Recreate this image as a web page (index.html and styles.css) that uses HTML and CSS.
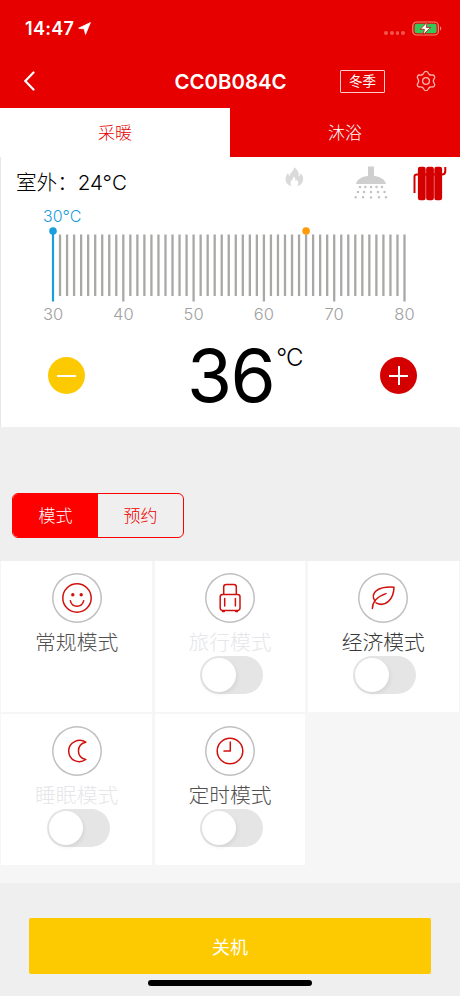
FILE: index.html
```html
<!DOCTYPE html>
<html lang="zh-CN">
<head>
    <meta charset="UTF-8">
    <meta name="viewport" content="width=device-width, initial-scale=1">
    <title>CC0B084C</title>
    <link rel="stylesheet" href="styles.css">
</head>
<body>
    <header>
        <div class="status-bar">
            <span class="time">14:47</span>
            <svg class="location" width="13" height="13" viewBox="0 0 13 13"><path d="M12.4 0.6 L7.5 12.4 L6.2 6.9 L0.6 6.2 Z" fill="#fff" stroke="#fff" stroke-width="0.8" stroke-linejoin="round"/></svg>
            <span class="signal"><i></i><i></i><i></i><i></i></span>
            <svg class="battery" width="30" height="15" viewBox="0 0 30 15">
                <rect x="0.8" y="1" width="25.6" height="13" rx="3.8" fill="none" stroke="#f08a78" stroke-width="1.2"/>
                <rect x="2.6" y="2.8" width="22" height="9.4" rx="2" fill="#35c759"/>
                <path d="M28 5.3 v4.4 c1.8 -0.8 1.8 -3.6 0 -4.4z" fill="#f08a78"/>
                <path d="M15.2 1.2 L8.2 8.3 h4.2 L11.1 13.8 L18.8 6.4 h-4.5 Z" fill="#fff" stroke="#b8201a" stroke-width="0.9"/>
            </svg>
        </div>
        <nav class="nav-bar">
            <svg class="back" width="12" height="20" viewBox="0 0 12 20"><path d="M10.5 1.5 L2.3 10 L10.5 18.5" fill="none" stroke="#fff" stroke-width="2.2" stroke-linecap="round"/></svg>
            <h1>CC0B084C</h1>
            <span class="season">冬季</span>
            <svg class="gear" width="22" height="22" viewBox="-11 -11 22 22">
                <defs><path id="tooth" d="M-3.7 -6.4 Q-2.5 -7 -2 -8.4 Q-1.6 -9.7 0 -9.7 Q1.6 -9.7 2 -8.4 Q2.5 -7 3.7 -6.4"/></defs>
                <g fill="none" stroke="#fbb4aa" stroke-width="1.3" stroke-linecap="round">
                    <use href="#tooth"/>
                    <use href="#tooth" transform="rotate(60)"/>
                    <use href="#tooth" transform="rotate(120)"/>
                    <use href="#tooth" transform="rotate(180)"/>
                    <use href="#tooth" transform="rotate(240)"/>
                    <use href="#tooth" transform="rotate(300)"/>
                    <circle r="3.4"/>
                </g>
            </svg>
        </nav>
    </header>

    <div class="tabs">
        <div class="tab active">采暖</div>
        <div class="tab">沐浴</div>
    </div>

    <section class="panel">
        <div class="info">
            <span class="outdoor">室外：24°C</span>
            <svg class="flame" width="19" height="20" viewBox="0 0 19 20"><path d="M9 0.3 C13 3 14.4 6 13.6 9.2 C15 8.8 15.5 7.6 15.5 6 C18 8.5 18.6 11 18 13.6 C17.3 16.7 15 18.5 12.3 19.3 C14 16.5 13.5 14.5 11.8 12.7 L10.4 14.2 C10.7 12 9.9 10.7 8.6 9.6 C8.4 12.4 5.2 13.9 5.6 17 C5.7 18 6 18.7 6.6 19.3 C2.8 18.3 0.4 15.4 0.6 11.8 C0.7 9.2 2 7.3 3.2 5.8 C3.3 7.4 3.7 8.5 4.9 9 C4.5 5.6 9 4.6 9 0.3z" fill="#dadada"/></svg>
            <svg class="shower" width="34" height="34" viewBox="0 0 34 34">
                <path d="M14 0.5 h6 v9.5 c6 0.7 11 3.2 12 8 H2 c1 -4.8 6 -7.3 12 -8z" fill="#cfcfcf"/>
                <g fill="none" stroke="#c2c2c2" stroke-width="2.5" stroke-linecap="round">
                    <path d="M6 20.9 h.01 M11.3 20.9 h.01 M17 20.9 h.01 M22.5 20.9 h.01 M28 20.9 h.01"/>
                    <path d="M4 26 h.01 M10 26 h.01 M17 26 h.01 M24 26 h.01 M30.5 26 h.01"/>
                    <path d="M1.7 31.2 h.01 M9 31.2 h.01 M17 31.5 h.01 M25 31.2 h.01 M32 31.2 h.01"/>
                </g>
            </svg>
            <svg class="radiator" width="34" height="35" viewBox="0 0 34 35">
                <g fill="#d40000">
                    <rect x="4.9" y="0.7" width="7.8" height="33.5" rx="2.2"/>
                    <rect x="13.1" y="0.7" width="7.8" height="33.5" rx="2.2"/>
                    <rect x="21.3" y="0.7" width="7.8" height="33.5" rx="2.2"/>
                </g>
                <path d="M1.5 27 V10.5 Q1.5 8.5 4 8.5 H29 Q32.3 8.5 32.3 5 V1" fill="none" stroke="#d40000" stroke-width="2"/>
            </svg>
        </div>
        <div class="scale-value">30°C</div>
        <svg class="ruler" id="ruler" width="460" height="100" viewBox="0 0 460 100"></svg>
        <div class="setting">
            <button class="round minus"></button>
            <div class="temp">36<sup>°C</sup></div>
            <button class="round plus"></button>
        </div>
    </section>

    <div class="segment">
        <span class="active">模式</span>
        <span>预约</span>
    </div>

    <section class="modes">
        <div class="mode">
            <svg class="icon" viewBox="0 0 50 50">
                <circle cx="25" cy="25" r="14.2"/>
                <path d="M18.3 27.7 C20 35.2 30 35.2 31.7 27.7"/>
                <circle class="dot" cx="20.8" cy="21.8" r="1.7"/><circle class="dot" cx="29.2" cy="21.8" r="1.7"/>
            </svg>
            <p>常规模式</p>
        </div>
        <div class="mode disabled">
            <svg class="icon" viewBox="0 0 50 50">
                <path d="M18.7 21.3 V14 Q18.7 11.5 21.2 11.5 H28.8 Q31.3 11.5 31.3 14 V21.3"/>
                <rect x="15.2" y="21.4" width="19.8" height="16" rx="2.3"/>
                <path d="M19.7 25.5 v7.5 M30.4 25.5 v7.5 M17.5 38.5 h1.8 M30.7 38.5 h1.8"/>
            </svg>
            <p>旅行模式</p>
            <span class="switch"></span>
        </div>
        <div class="mode eco">
            <svg class="icon" viewBox="0 0 50 50">
                <path d="M14.4 35.5 C14.5 28.5 20 23.3 28 20.6 M17 28.4 C11.5 19.5 20 13.3 36 14.2 C35.7 26 27.5 35 18 29.8"/>
            </svg>
            <p>经济模式</p>
            <span class="switch"></span>
        </div>
        <div class="mode disabled">
            <svg class="icon" viewBox="0 0 50 50">
                <path d="M33.8 16.2 C27 11.8 16.7 16 16.7 25 C16.7 34.5 27 38.3 33.8 33.5 C24 32.5 24 17.5 33.8 16.2z"/>
            </svg>
            <p>睡眠模式</p>
            <span class="switch"></span>
        </div>
        <div class="mode">
            <svg class="icon" viewBox="0 0 50 50">
                <circle cx="25" cy="25" r="12.8"/>
                <path d="M25.3 16 V25 H19"/>
            </svg>
            <p>定时模式</p>
            <span class="switch"></span>
        </div>
    </section>

    <footer>
        <button class="power">关机</button>
        <div class="home-indicator"></div>
    </footer>

    <script>
        // Temperature ruler, 30 to 80 degrees
        const left = 53, step = 7.03;
        const current = 30, marker = 66;
        let out = '';
        for (let t = 30; t <= 80; t++) {
            const x = (left + (t - 30) * step).toFixed(2);
            const major = t % 10 === 0;
            if (t !== current) {
                out += `<line class="tick" x1="${x}" x2="${x}" y1="8.5" y2="${major ? 75.5 : 70}"/>`;
            }
            if (major) {
                out += `<text x="${x}" y="94">${t}</text>`;
            }
            if (t === marker) {
                out += `<circle class="marker" cx="${x}" cy="5" r="3.8"/>`;
            }
            if (t === current) {
                out += `<line class="current" x1="${x}" x2="${x}" y1="5" y2="75.5"/><circle class="knob" cx="${x}" cy="5" r="3.8"/>`;
            }
        }
        document.getElementById('ruler').innerHTML = out;
    </script>
</body>
</html>
```
FILE: styles.css
```css
* {
    box-sizing: border-box;
    margin: 0;
    padding: 0;
}

body {
    width: 460px;
    height: 996px;
    overflow: hidden;
    background: #efefef;
    font-family: Inter, "Noto Sans CJK SC", sans-serif;
    color: #000;
}

svg {
    display: block;
    flex: none;
}

button {
    border: none;
    font-family: inherit;
}

header {
    height: 108px;
    background: #e60000;
    color: #fff;
}

.status-bar {
    display: flex;
    align-items: center;
    height: 57px;
    padding: 0 18px 0 25px;
}

.time {
    font-size: 18px;
    font-weight: 600;
    letter-spacing: 0.3px;
    width: 53px;
}

.signal {
    display: flex;
    gap: 1.8px;
    margin: 9px 7px 0 auto;
}

.signal i {
    width: 3.8px;
    height: 3.8px;
    border-radius: 50%;
    background: #f0574c;
}

.nav-bar {
    display: grid;
    grid-template-columns: 60px 1fr 45px 75px;
    align-items: center;
    height: 48px;
    padding-left: 23px;
}

h1 {
    font-size: 20.4px;
    font-weight: 600;
    padding-left: 91.5px;
}

.season {
    height: 23px;
    border: 1px solid #fcc;
    border-radius: 1px;
    font-size: 13.5px;
    line-height: 20px;
    text-align: center;
}

.gear {
    margin-left: 30px;
}

.tabs {
    display: flex;
    height: 49px;
    background: #e60000;
}

.tab {
    flex: 1;
    color: #fff;
    font-size: 17px;
    font-weight: 300;
    line-height: 50px;
    text-align: center;
}

.tab.active {
    background: #fff;
    color: #e60000;
}

.panel {
    height: 270px;
    background: #fff;
    border-left: 1px solid #e8e8e8;
}

.info {
    display: flex;
    align-items: flex-start;
    height: 50px;
    padding: 9px 13px 0 15px;
}

.outdoor {
    width: 269px;
    font-size: 20.6px;
    font-weight: 300;
    line-height: 33px;
}

.flame {
    margin: 1px 50px 0 0;
}

.shower {
    margin-right: 25px;
}

.scale-value {
    padding-left: 42px;
    color: #1a9bdc;
    font-size: 16px;
    font-weight: 300;
    line-height: 19px;
}

.ruler {
    margin-left: -1px;
}

.ruler text {
    fill: #a0a0a0;
    font-size: 16.5px;
    font-weight: 300;
    text-anchor: middle;
}

.tick {
    stroke: #a8a8a6;
    stroke-width: 2.3;
}

.current {
    stroke: #1a9fdc;
    stroke-width: 2.2;
}

.knob {
    fill: #1a9fdc;
}

.marker {
    fill: #ff9a0a;
}

.setting {
    display: flex;
    align-items: center;
    justify-content: space-between;
    height: 99px;
    padding: 0 42.5px 0 47px;
}

.round {
    width: 37px;
    height: 37px;
    border-radius: 50%;
    background: linear-gradient(#fff, #fff) center / 19px 2px no-repeat #fdca02;
}

.plus {
    background: linear-gradient(#fff, #fff) center / 19px 2px no-repeat, linear-gradient(#fff, #fff) center / 2px 19px no-repeat #d40000;
}

.temp {
    display: flex;
    font-size: 73px;
    letter-spacing: -1.5px;
    line-height: 99px;
    padding-left: 24px;
}

.temp sup {
    margin-left: 2px;
    font-size: 24px;
    font-weight: 300;
    letter-spacing: -1px;
    line-height: 63px;
}

.segment {
    display: flex;
    width: 172px;
    height: 45px;
    margin: 66px 0 23px 12px;
    border: 1px solid #f00;
    border-radius: 6px;
    overflow: hidden;
}

.segment span {
    flex: 1;
    color: #f00000;
    font-size: 17px;
    font-weight: 300;
    line-height: 45px;
    text-align: center;
}

.segment .active {
    background: #f00;
    color: #fff;
}

.modes {
    display: grid;
    grid-template-columns: repeat(3, 1fr);
    grid-auto-rows: 151px;
    gap: 2.4px;
    height: 322px;
    padding: 0 1.2px;
    background: #f6f6f6;
}

.mode {
    display: flex;
    flex-direction: column;
    align-items: center;
    padding-top: 11.5px;
    background: #fff;
}

.icon {
    width: 50px;
    height: 50px;
    border-radius: 50%;
    box-shadow: inset 0 0 0 1.5px #c0c0c0;
    fill: none;
    stroke: #d0100c;
    stroke-width: 1.5;
    stroke-linecap: round;
    stroke-linejoin: round;
}

.icon .dot {
    fill: #d0100c;
    stroke: none;
}

.mode p {
    height: 33.5px;
    color: #505050;
    font-size: 20.8px;
    font-weight: 300;
    line-height: 39px;
}

.mode.eco p {
    color: #383838;
}

.mode.disabled p {
    color: #e6e6ea;
}

.switch {
    width: 63px;
    height: 38px;
    margin-left: 3px;
    padding: 2px;
    border-radius: 19px;
    background: #e5e5e5;
}

.switch::before {
    content: "";
    display: block;
    width: 34px;
    height: 34px;
    border-radius: 50%;
    background: #fff;
    box-shadow: 1px 2px 4px rgba(0, 0, 0, 0.08);
}

footer {
    padding: 35px 29px 0;
}

.power {
    display: block;
    width: 402px;
    height: 56px;
    padding-bottom: 1px;
    border-radius: 2px;
    background: #fdca02;
    color: #fff;
    font-size: 18px;
}

.home-indicator {
    width: 164px;
    height: 6px;
    margin: 6px auto 0;
    border-radius: 3px;
    background: #000;
}
```
